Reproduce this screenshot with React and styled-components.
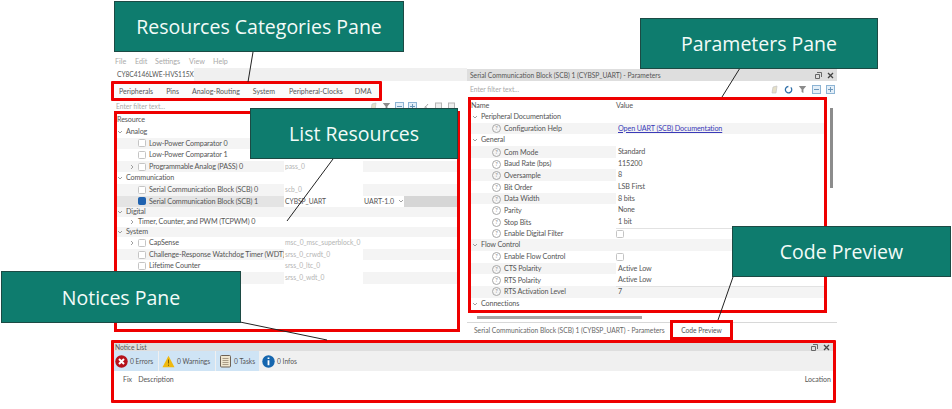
import React from 'react';
import styled, { createGlobalStyle } from 'styled-components';

const GlobalStyle = createGlobalStyle`
  html, body { margin: 0; padding: 0; background: #fff; }
  body { font-family: Lato, "Liberation Sans", sans-serif; }
`;

const resourceRows = [
  { kind: 'group', label: 'Analog' },
  { kind: 'item', label: 'Low-Power Comparator 0', check: true, shade: true },
  { kind: 'item', label: 'Low-Power Comparator 1', check: true },
  { kind: 'item', label: 'Programmable Analog (PASS) 0', check: true, arrow: true, shade: true, name: 'pass_0' },
  { kind: 'group', label: 'Communication' },
  { kind: 'item', label: 'Serial Communication Block (SCB) 0', check: true, shade: true, name: 'scb_0' },
  { kind: 'item', label: 'Serial Communication Block (SCB) 1', check: true, checked: true, selected: true, name: 'CYBSP_UART', dark: true, version: 'UART-1.0' },
  { kind: 'group', label: 'Digital', shade: true, compact: true },
  { kind: 'item', label: 'Timer, Counter, and PWM (TCPWM) 0', arrow: true, compact: true },
  { kind: 'group', label: 'System', shade: true, compact: true },
  { kind: 'item', label: 'CapSense', check: true, arrow: true, name: 'msc_0_msc_superblock_0' },
  { kind: 'item', label: 'Challenge-Response Watchdog Timer (WDT)', check: true, shade: true, name: 'srss_0_crwdt_0' },
  { kind: 'item', label: 'Lifetime Counter', check: true, name: 'srss_0_ltc_0' },
  { kind: 'item', label: '', shade: true, name: 'srss_0_wdt_0' },
];

const paramRows = [
  { group: 'Peripheral Documentation' },
  { label: 'Configuration Help', link: 'Open UART (SCB) Documentation', shade: true },
  { group: 'General' },
  { label: 'Com Mode', value: 'Standard', shade: true, boxed: true },
  { label: 'Baud Rate (bps)', value: '115200', boxed: true },
  { label: 'Oversample', value: '8', shade: true, boxed: true },
  { label: 'Bit Order', value: 'LSB First', boxed: true },
  { label: 'Data Width', value: '8 bits', shade: true, boxed: true },
  { label: 'Parity', value: 'None', boxed: true },
  { label: 'Stop Bits', value: '1 bit', boxed: true },
  { label: 'Enable Digital Filter', box: true },
  { group: 'Flow Control', shade: true },
  { label: 'Enable Flow Control', box: true },
  { label: 'CTS Polarity', value: 'Active Low', shade: true, boxed: true },
  { label: 'RTS Polarity', value: 'Active Low', boxed: true },
  { label: 'RTS Activation Level', value: '7', shade: true },
  { group: 'Connections' },
];

const Page = styled.div`
  position: relative;
  width: 952px;
  height: 409px;
  overflow: hidden;
  background: #fff;
  padding: 55px 0 0 111px;
  box-sizing: border-box;
  color: #555;
`;

const Window = styled.div`
  width: 726px;
  display: flex;
  flex-direction: column;
`;

const Menu = styled.div`
  display: flex;
  height: 13px;
  padding-left: 4px;
  font-size: 7.2px;
  line-height: 13px;
  color: #aaa;
`;

const MenuItem = styled.span`
  width: ${(p) => p.$w}px;
`;

const Panes = styled.div`
  display: flex;
  height: 272px;
`;

const LeftPane = styled.div`
  width: 356px;
  flex: none;
  padding-left: 1px;
  box-sizing: border-box;
`;

const DeviceBar = styled.div`
  height: 13px;
  background: #f0f0f0;
  display: flex;
`;

const DeviceTab = styled.div`
  width: 82px;
  background: #fff;
  padding-left: 5px;
  box-sizing: border-box;
  font-size: 6.6px;
  line-height: 13px;
  color: #555;
  white-space: nowrap;
`;

const TabStrip = styled.div`
  margin-left: -1px;
  width: 271px;
  height: 20px;
  box-sizing: border-box;
  border: 3px solid #ee0000;
  border-radius: 1px;
  display: flex;
  align-items: center;
  padding-left: 5px;
  background: #fbfbfb;
  font-size: 7px;
  color: #555;
  white-space: nowrap;
`;

const TabItem = styled.span`
  margin-right: ${(p) => p.$gap}px;
`;

const FilterRow = styled.div`
  height: ${(p) => p.$height}px;
  display: flex;
  align-items: center;
  justify-content: space-between;
  font-size: 6.7px;
  color: #aaa;
  padding: 0 ${(p) => p.$right}px 0 ${(p) => p.$left}px;
`;

const Tools = styled.div`
  display: flex;
  align-items: center;
  gap: ${(p) => p.$gap}px;
`;

const ListBox = styled.div`
  margin-left: 2px;
  width: 346px;
  height: 221px;
  box-sizing: border-box;
  border: 3px solid #ee0000;
  font-size: 7.2px;
  letter-spacing: -0.12px;
  color: #555;
`;

const ListHead = styled.div`
  height: 12px;
  line-height: 12px;
`;

const ResRow = styled.div`
  display: grid;
  grid-template-columns: 167px 79px 1fr;
  height: ${(p) => (p.$compact ? 10 : 11.6)}px;
  line-height: ${(p) => (p.$compact ? 10 : 11.6)}px;
  background: ${(p) => (p.$shade ? '#f4f4f4' : 'none')};
`;

const ResName = styled.div`
  display: flex;
  align-items: center;
  gap: 3px;
  padding-left: ${(p) => p.$indent}px;
  background: ${(p) => (p.$selected ? '#e4e4e4' : 'none')};
  white-space: nowrap;
  overflow: hidden;
`;

const ResAlias = styled.div`
  padding-left: 1px;
  background: ${(p) => (p.$plain ? 'none' : '#fff')};
  color: ${(p) => (p.$dark ? '#555' : '#b4b4b4')};
  font-size: 6.7px;
  letter-spacing: 0;
  white-space: nowrap;
`;

const ResVersion = styled.div`
  padding-left: 1px;
  background: ${(p) => (p.$selected ? 'linear-gradient(90deg,#fff 41px,#d6d6d6 41px)' : 'none')};
  font-size: 7px;
  letter-spacing: 0;
  display: flex;
  align-items: center;
  gap: 4px;
`;

const Arrow = styled.svg`
  flex: none;
  width: 6px;
  height: 6px;
`;

const CheckBox = styled.span`
  flex: none;
  width: 6px;
  height: 6px;
  border: 1px solid ${(p) => (p.$checked ? '#1f62b0' : '#c4c4c4')};
  border-radius: 1.5px;
  background: ${(p) => (p.$checked ? '#1f62b0' : '#fff')};
  margin-left: ${(p) => p.$shift || 0}px;
`;

const RightPane = styled.div`
  flex: 1;
  padding-top: 1px;
  box-sizing: border-box;
  display: flex;
  flex-direction: column;
`;

const PaneHeader = styled.div`
  height: ${(p) => p.$height}px;
  flex: none;
  background: #dedede;
  display: flex;
  align-items: center;
  justify-content: space-between;
  padding: 0 3px 0 ${(p) => p.$left}px;
  font-size: 6.7px;
  color: #555;
`;

const HeaderIcons = styled.div`
  display: flex;
  gap: 5px;
  align-items: center;
`;

const ParamArea = styled.div`
  display: flex;
  align-items: flex-start;
`;

const ParamBox = styled.div`
  margin-left: 1px;
  width: 359px;
  height: 216px;
  flex: none;
  box-sizing: border-box;
  border: 3px solid #ee0000;
  font-size: 7.2px;
  letter-spacing: -0.12px;
  color: #555;
  overflow: hidden;
`;

const VScrollThumb = styled.div`
  width: 3px;
  height: 80px;
  margin: 11px 0 0 3px;
  background: #8c8c8c;
`;

const ParamHead = styled.div`
  display: grid;
  grid-template-columns: 145px 1fr;
  height: 11px;
  line-height: 11px;
`;

const ParamRow = styled.div`
  display: grid;
  grid-template-columns: 145px 1fr;
  height: 11.68px;
  line-height: 11.68px;
  background: ${(p) => (p.$shade ? '#f4f4f4' : 'none')};
`;

const ParamLabel = styled.div`
  display: flex;
  align-items: center;
  gap: 3px;
  padding-left: ${(p) => p.$indent}px;
  white-space: nowrap;
`;

const ParamValue = styled.div`
  padding-left: 2px;
  display: flex;
  align-items: center;
  background: ${(p) => (p.$boxed ? '#fff' : 'none')};
  border-bottom: ${(p) => (p.$boxed ? '1px solid #e2e2e2' : 'none')};
  box-sizing: border-box;
`;

const DocLink = styled.span`
  color: #3a3ab8;
  text-decoration: underline;
`;

const HelpMark = styled.span`
  flex: none;
  width: 7px;
  height: 7px;
  border: 1px solid #a8a8a8;
  border-radius: 50%;
  font-size: 5.5px;
  line-height: 7px;
  text-align: center;
  color: #888;
`;

const ScrollTrack = styled.div`
  height: 9px;
  padding: 3px 0 0 10px;
  box-sizing: border-box;
`;

const ScrollThumb = styled.div`
  width: 165px;
  height: 3px;
  background: #a6a6a6;
`;

const BottomTabs = styled.div`
  height: 18px;
  border-top: 1px solid #d8d8d8;
  box-sizing: border-box;
  display: flex;
  align-items: flex-start;
  font-size: 6.7px;
  color: #666;
  padding-left: 7px;
`;

const BottomTab = styled.div`
  width: 196px;
  line-height: 15px;
  white-space: nowrap;
`;

const PreviewTab = styled.div`
  width: 63px;
  height: 20px;
  margin-top: -3px;
  box-sizing: border-box;
  border: 3px solid #ee0000;
  text-align: center;
  line-height: 14px;
  color: #555;
  background: #fff;
  white-space: nowrap;
`;

const NoticeBox = styled.div`
  width: 725px;
  height: 63px;
  box-sizing: border-box;
  border: 3px solid #ee0000;
  border-radius: 1px;
  font-size: 7px;
  color: #555;
`;

const NoticeBar = styled.div`
  height: 20px;
  background: #f0f0f0;
  display: flex;
  align-items: center;
`;

const Counter = styled.div`
  width: ${(p) => p.$w}px;
  height: 20px;
  flex: none;
  box-sizing: border-box;
  display: flex;
  align-items: center;
  gap: 2px;
  padding-left: ${(p) => p.$left}px;
  background: ${(p) => (p.$on ? '#cfe4f5' : 'transparent')};
  border-right: ${(p) => (p.$on ? '1px solid #f0f0f0' : 'none')};
  white-space: nowrap;
  font-size: 6.7px;
`;

const NoticeColumns = styled.div`
  display: flex;
  justify-content: space-between;
  padding: 3px 2px 0 9px;
  line-height: 10px;
`;

const NoticeLeft = styled.div`
  display: flex;
  gap: 6px;
`;

// annotation callouts sit over the screenshot
const Callout = styled.div`
  position: absolute;
  left: ${(p) => p.$x}px;
  top: ${(p) => p.$y}px;
  width: ${(p) => p.$w}px;
  height: ${(p) => p.$h}px;
  box-sizing: border-box;
  background: #0e7c6e;
  border: 1px solid #1c4a44;
  color: #f2fbf8;
  font-family: "Open Sans", "Liberation Sans", sans-serif;
  font-size: 19.5px;
  display: flex;
  align-items: center;
  justify-content: center;
`;

const Lines = styled.svg`
  position: absolute;
  left: 0;
  top: 0;
  width: 952px;
  height: 409px;
  pointer-events: none;
`;

const Chevron = ({ open }) => (
  <Arrow viewBox="0 0 6 6">
    <path d={open ? 'M1 2l2 2 2-2' : 'M2 1l2 2-2 2'} fill="none" stroke="#888" strokeWidth=".8" />
  </Arrow>
);

const Glyph = ({ children }) => (
  <svg width="9" height="9" viewBox="0 0 9 9">{children}</svg>
);

const Eraser = () => (
  <Glyph><path d="M2 8l1-6 4-1-1 7z" fill="#e6e0c8" stroke="#c4c4c4" strokeWidth=".7" /></Glyph>
);
const Refresh = () => (
  <Glyph><path d="M6.8 2.4a3.2 3.2 0 1 1-2.4-.9" fill="none" stroke="#2f6fa8" strokeWidth="1.3" /></Glyph>
);
const Funnel = () => (
  <Glyph><path d="M.8 1h7.4L5.4 4.6V8L3.6 7V4.6z" fill="#8b8b8b" /></Glyph>
);
const Collapse = () => (
  <Glyph>
    <rect x=".5" y=".5" width="8" height="8" fill="#e4eff8" stroke="#8db4d4" />
    <path d="M2 4.5h5" stroke="#6d97ba" />
  </Glyph>
);
const Expand = () => (
  <Glyph>
    <rect x=".5" y=".5" width="8" height="8" fill="#e4eff8" stroke="#8db4d4" />
    <path d="M2 4.5h5M4.5 2v5" stroke="#6d97ba" />
  </Glyph>
);
const Scissors = () => (
  <Glyph><path d="M2 8l5-6M7 8L4 4" stroke="#aaa" fill="none" /></Glyph>
);
const Sheet = () => (
  <Glyph><rect x="1.5" y="1" width="6" height="7" fill="#eee" stroke="#b5b5b5" /></Glyph>
);
const WindowMark = () => (
  <svg width="7" height="7" viewBox="0 0 7 7">
    <path d="M2 .5h4.5V5M.5 2.5h4v4h-4z" fill="none" stroke="#666" />
  </svg>
);
const CloseMark = () => (
  <svg width="7" height="7" viewBox="0 0 7 7">
    <path d="M1 1l5 5M6 1L1 6" stroke="#444" strokeWidth="1.3" />
  </svg>
);

const ErrorIcon = () => (
  <svg width="13" height="13" viewBox="0 0 13 13">
    <circle cx="6.5" cy="6.5" r="6.2" fill="#b5121b" />
    <path d="M4 4l5 5M9 4l-5 5" stroke="#fff" strokeWidth="2" />
  </svg>
);
const WarnIcon = () => (
  <svg width="13" height="13" viewBox="0 0 13 13">
    <path d="M6.5.8l6 11.4H.5z" fill="#f0b90e" />
    <path d="M6.5 4.5v4M6.5 9.6v1.2" stroke="#7a5c00" />
  </svg>
);
const TaskIcon = () => (
  <svg width="13" height="14" viewBox="0 0 13 14">
    <rect x="1.5" y="1.5" width="10" height="11.5" rx="1" fill="#efe6cf" stroke="#6e6254" />
    <path d="M3.5 4.5h6M3.5 6.5h6M3.5 8.5h6M3.5 10.5h6" stroke="#a99c86" />
  </svg>
);
const InfoIcon = () => (
  <svg width="13" height="13" viewBox="0 0 13 13">
    <circle cx="6.5" cy="6.5" r="6.2" fill="#1666ae" />
    <path d="M6.5 5.2v5M6.5 2.6v1.5" stroke="#fff" strokeWidth="1.8" />
  </svg>
);

const menus = [['File', 20], ['Edit', 20], ['Settings', 34], ['View', 24], ['Help', 24]];

const tabs = [
  ['Peripherals', 13],
  ['Pins', 13],
  ['Analog-Routing', 13],
  ['System', 14],
  ['Peripheral-Clocks', 12],
  ['DMA', 0],
];

const callouts = [
  { text: 'Resources Categories Pane', x: 114, y: 1, w: 290, h: 51 },
  { text: 'Parameters Pane', x: 640, y: 18, w: 238, h: 51 },
  { text: 'List Resources', x: 250, y: 108, w: 208, h: 51 },
  { text: 'Code Preview', x: 732, y: 226, w: 219, h: 51 },
  { text: 'Notices Pane', x: 1, y: 271, w: 240, h: 52 },
];

export default function App() {
  return (
    <Page>
      <GlobalStyle />
      <Window>
        <Menu>
          {menus.map(([label, w]) => <MenuItem key={label} $w={w}>{label}</MenuItem>)}
        </Menu>
        <Panes>
          <LeftPane>
            <DeviceBar><DeviceTab>CY8C4146LWE-HVS115X</DeviceTab></DeviceBar>
            <TabStrip>
              {tabs.map(([label, gap]) => <TabItem key={label} $gap={gap}>{label}</TabItem>)}
            </TabStrip>
            <FilterRow $height={10} $right={11} $left={4}>
              <span>Enter filter text...</span>
              <Tools $gap={4}>
                <Eraser /><Funnel /><Collapse /><Expand /><Scissors /><Sheet /><Sheet />
              </Tools>
            </FilterRow>
            <ListBox>
              <ListHead>Resource</ListHead>
              {resourceRows.map((r) => (
                <ResRow key={r.label || r.name} $shade={r.shade} $compact={r.compact}>
                  {r.kind === 'group' ? (
                    <ResName $indent={0}><Chevron open />{r.label}</ResName>
                  ) : (
                    <ResName $indent={r.arrow ? 12 : 21} $selected={r.selected}>
                      {r.arrow && <Chevron />}
                      {r.check && <CheckBox $checked={r.checked} />}
                      {r.label}
                    </ResName>
                  )}
                  <ResAlias $dark={r.dark} $plain={r.kind === 'group'}>{r.name}</ResAlias>
                  <ResVersion $selected={r.selected}>
                    {r.version}
                    {r.version && <Chevron open />}
                  </ResVersion>
                </ResRow>
              ))}
            </ListBox>
          </LeftPane>
          <RightPane>
            <PaneHeader $left={3} $height={12}>
              Serial Communication Block (SCB) 1 (CYBSP_UART) - Parameters
              <HeaderIcons><WindowMark /><CloseMark /></HeaderIcons>
            </PaneHeader>
            <FilterRow $height={16} $right={2} $left={3}>
              <span>Enter filter text...</span>
              <Tools $gap={5}>
                <Eraser /><Refresh /><Funnel /><Collapse /><Expand />
              </Tools>
            </FilterRow>
            <ParamArea>
              <ParamBox>
                <ParamHead><span>Name</span><span>Value</span></ParamHead>
                {paramRows.map((r) => (
                  <ParamRow key={r.group || r.label} $shade={r.shade}>
                    {r.group ? (
                      <ParamLabel $indent={1}><Chevron open />{r.group}</ParamLabel>
                    ) : (
                      <ParamLabel $indent={21}><HelpMark>?</HelpMark>{r.label}</ParamLabel>
                    )}
                    <ParamValue $boxed={r.boxed}>
                      {r.link && <DocLink>{r.link}</DocLink>}
                      {r.value}
                      {r.box && <CheckBox $shift={-2} />}
                    </ParamValue>
                  </ParamRow>
                ))}
              </ParamBox>
              <VScrollThumb />
            </ParamArea>
            <ScrollTrack><ScrollThumb /></ScrollTrack>
            <BottomTabs>
              <BottomTab>Serial Communication Block (SCB) 1 (CYBSP_UART) - Parameters</BottomTab>
              <PreviewTab>Code Preview</PreviewTab>
            </BottomTabs>
          </RightPane>
        </Panes>
        <NoticeBox>
          <PaneHeader $left={1} $height={8}>
            Notice List
            <HeaderIcons><WindowMark /><CloseMark /></HeaderIcons>
          </PaneHeader>
          <NoticeBar>
            <Counter $on $w={45} $left={1}><ErrorIcon />0 Errors</Counter>
            <Counter $on $w={57} $left={3}><WarnIcon />0 Warnings</Counter>
            <Counter $on $w={44} $left={3}><TaskIcon />0 Tasks</Counter>
            <Counter $w={40} $left={2}><InfoIcon />0 Infos</Counter>
          </NoticeBar>
          <NoticeColumns>
            <NoticeLeft><span>Fix</span><span>Description</span></NoticeLeft>
            <span>Location</span>
          </NoticeColumns>
        </NoticeBox>
      </Window>
      <Lines viewBox="0 0 952 409">
        <g stroke="#222" strokeWidth="1" fill="none">
          <path d="M253 52L248 82" />
          <path d="M740 68L722 97" />
          <path d="M333 159L287 221" />
          <path d="M240 322L327 340" />
          <path d="M733 277L718 320" />
        </g>
      </Lines>
      {callouts.map((c) => (
        <Callout key={c.text} $x={c.x} $y={c.y} $w={c.w} $h={c.h}>{c.text}</Callout>
      ))}
    </Page>
  );
}
